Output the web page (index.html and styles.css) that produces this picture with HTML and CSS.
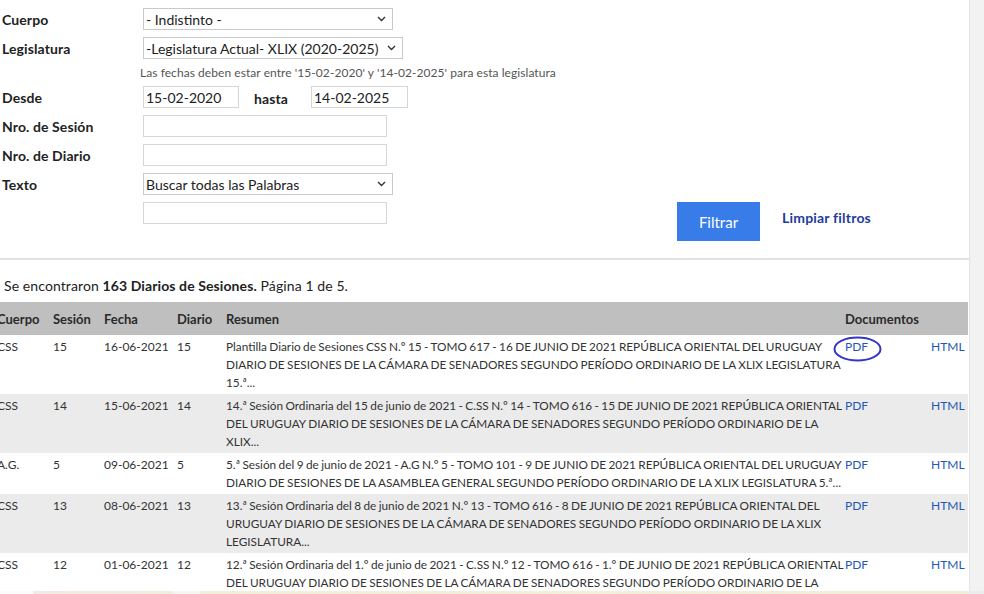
FILE: index.html
```html
<!DOCTYPE html>
<html lang="es">
<head>
<meta charset="utf-8">
<title>Diarios de Sesiones</title>
<link rel="stylesheet" href="styles.css">
</head>
<body>
<div class="page">
  <form class="filters">
    <div class="grid">
      <label class="lbl">Cuerpo</label>
      <div class="sel sel-cuerpo">
        <select><option>- Indistinto -</option></select>
        <svg class="chev" width="9" height="6" viewBox="0 0 9 6"><path d="M1 1 L4.5 4.5 L8 1" fill="none" stroke="#333" stroke-width="1.4"/></svg>
      </div>

      <label class="lbl">Legislatura</label>
      <div class="sel sel-leg">
        <select><option>-Legislatura Actual- XLIX (2020-2025)</option></select>
        <svg class="chev" width="9" height="6" viewBox="0 0 9 6"><path d="M1 1 L4.5 4.5 L8 1" fill="none" stroke="#333" stroke-width="1.4"/></svg>
      </div>

      <span></span>
      <p class="hint">Las fechas deben estar entre '15-02-2020' y '14-02-2025' para esta legislatura</p>

      <label class="lbl">Desde</label>
      <div class="dates">
        <input class="inp date" type="text" value="15-02-2020">
        <span class="lbl hasta">hasta</span>
        <input class="inp date date2" type="text" value="14-02-2025">
      </div>

      <label class="lbl">Nro. de Sesión</label>
      <input class="inp wide" type="text">

      <label class="lbl">Nro. de Diario</label>
      <input class="inp wide" type="text">

      <label class="lbl">Texto</label>
      <div class="sel sel-texto">
        <select><option>Buscar todas las Palabras</option></select>
        <svg class="chev" width="9" height="6" viewBox="0 0 9 6"><path d="M1 1 L4.5 4.5 L8 1" fill="none" stroke="#333" stroke-width="1.4"/></svg>
      </div>

      <span></span>
      <div class="last">
        <input class="inp wide" type="text">
        <button class="btn" type="button">Filtrar</button>
        <a class="clear" href="#">Limpiar filtros</a>
      </div>
    </div>
  </form>

  <p class="count">Se encontraron <b>163 Diarios de Sesiones.</b> Página 1 de 5.</p>

  <table class="results">
    <colgroup>
      <col class="c-cuerpo"><col class="c-sesion"><col class="c-fecha"><col class="c-diario"><col class="c-resumen"><col class="c-pdf"><col class="c-html">
    </colgroup>
    <thead>
      <tr><th>Cuerpo</th><th>Sesión</th><th>Fecha</th><th>Diario</th><th>Resumen</th><th colspan="2">Documentos</th></tr>
    </thead>
    <tbody>
      <tr>
        <td>CSS</td><td>15</td><td>16-06-2021</td><td>15</td>
        <td class="sum">Plantilla Diario de Sesiones CSS N.º 15 - TOMO 617 - 16 DE JUNIO DE 2021 REPÚBLICA ORIENTAL DEL URUGUAY<br>DIARIO DE SESIONES DE LA CÁMARA DE SENADORES SEGUNDO PERÍODO ORDINARIO DE LA XLIX LEGISLATURA<br>15.ª...</td>
        <td class="pdfcell"><a href="#">PDF</a><svg class="mark" width="49" height="26" viewBox="0 0 49 26"><ellipse cx="24.5" cy="13" rx="23" ry="11.5" fill="none" stroke="#3535c8" stroke-width="2"/></svg></td>
        <td><a href="#">HTML</a></td>
      </tr>
      <tr>
        <td>CSS</td><td>14</td><td>15-06-2021</td><td>14</td>
        <td class="sum">14.ª Sesión Ordinaria del 15 de junio de 2021 - C.SS N.º 14 - TOMO 616 - 15 DE JUNIO DE 2021 REPÚBLICA ORIENTAL<br>DEL URUGUAY DIARIO DE SESIONES DE LA CÁMARA DE SENADORES SEGUNDO PERÍODO ORDINARIO DE LA<br>XLIX...</td>
        <td><a href="#">PDF</a></td><td><a href="#">HTML</a></td>
      </tr>
      <tr>
        <td>A.G.</td><td>5</td><td>09-06-2021</td><td>5</td>
        <td class="sum">5.ª Sesión del 9 de junio de 2021 - A.G N.º 5 - TOMO 101 - 9 DE JUNIO DE 2021 REPÚBLICA ORIENTAL DEL URUGUAY<br>DIARIO DE SESIONES DE LA ASAMBLEA GENERAL SEGUNDO PERÍODO ORDINARIO DE LA XLIX LEGISLATURA 5.ª...</td>
        <td><a href="#">PDF</a></td><td><a href="#">HTML</a></td>
      </tr>
      <tr>
        <td>CSS</td><td>13</td><td>08-06-2021</td><td>13</td>
        <td class="sum">13.ª Sesión Ordinaria del 8 de junio de 2021 N.º 13 - TOMO 616 - 8 DE JUNIO DE 2021 REPÚBLICA ORIENTAL DEL<br>URUGUAY DIARIO DE SESIONES DE LA CÁMARA DE SENADORES SEGUNDO PERÍODO ORDINARIO DE LA XLIX<br>LEGISLATURA...</td>
        <td><a href="#">PDF</a></td><td><a href="#">HTML</a></td>
      </tr>
      <tr>
        <td>CSS</td><td>12</td><td>01-06-2021</td><td>12</td>
        <td class="sum">12.ª Sesión Ordinaria del 1.º de junio de 2021 - C.SS N.º 12 - TOMO 616 - 1.º DE JUNIO DE 2021 REPÚBLICA ORIENTAL<br>DEL URUGUAY DIARIO DE SESIONES DE LA CÁMARA DE SENADORES SEGUNDO PERÍODO ORDINARIO DE LA<br>XLIX LEGISLATURA...</td>
        <td><a href="#">PDF</a></td><td><a href="#">HTML</a></td>
      </tr>
    </tbody>
  </table>
</div>
<div class="bottom-strip"></div>
</body>
</html>
```
FILE: styles.css
```css
* { box-sizing: border-box; }
html, body { margin: 0; padding: 0; }
body {
  background: #f2f2f2;
  font-family: Lato, "Noto Sans", sans-serif;
  color: #222;
  overflow: hidden;
  height: 594px;
}
.page {
  width: 970px;
  background: #fff;
  border-right: 1px solid #e4e4e4;
  min-height: 594px;
}
.filters {
  padding: 8px 0 17px 2px;
  border-bottom: 2px solid #e2e2e2;
}
.grid {
  display: grid;
  grid-template-columns: 141px 1fr;
  row-gap: 7px;
  align-items: center;
}
.lbl {
  font-weight: 700;
  font-size: 14px;
  color: #222;
  letter-spacing: 0.1px;
}
.sel { position: relative; height: 22px; }
.sel select {
  appearance: none;
  -webkit-appearance: none;
  height: 22px;
  border: 1px solid #c9c9c9;
  border-radius: 0;
  background: #fff;
  font-family: Lato, "Noto Sans", sans-serif;
  font-size: 14px;
  color: #222;
  padding: 0 20px 0 2px;
  margin: 0;
  display: block;
}
.sel-cuerpo, .sel-cuerpo select, .sel-texto, .sel-texto select { width: 250px; }
.sel-leg, .sel-leg select { width: 260px; }
.chev { position: absolute; top: 8px; right: 7px; pointer-events: none; }
.hint {
  margin: 0 0 0 -3px;
  font-size: 12px;
  line-height: 13px;
  color: #555;
  letter-spacing: 0.06px;
}
.inp {
  height: 22px;
  border: 1px solid #d6d6d6;
  background: #fff;
  font-family: Lato, "Noto Sans", sans-serif;
  font-size: 14px;
  color: #222;
  padding: 0 2px;
  margin: 0;
  display: block;
}
.wide { width: 244px; }
.dates { display: flex; align-items: center; }
.date { width: 96px; }
.date2 { width: 97px; }
.hasta { margin: 0 23px 0 15px; padding-top: 2px; }
.last { display: flex; align-items: flex-start; }
.btn {
  margin-left: 290px;
  width: 83px;
  height: 39px;
  background: #387ce9;
  color: #fff;
  border: none;
  font-family: Lato, "Noto Sans", sans-serif;
  font-size: 15px;
  padding: 0;
}
.clear {
  margin: 7px 0 0 22px;
  font-size: 14px;
  font-weight: 700;
  color: #1f3d9c;
  text-decoration: none;
  letter-spacing: 0.2px;
}
.count {
  margin: 17px 0 0 4px;
  font-size: 14px;
  line-height: 17px;
  color: #222;
  letter-spacing: 0.1px;
}
.count b { font-weight: 700; }
.results {
  margin: 8px 0 0 -8px;
  width: 976px;
  table-layout: fixed;
  border-collapse: collapse;
  font-size: 12px;
  color: #333;
}
.c-cuerpo { width: 56px; }
.c-sesion { width: 51px; }
.c-fecha { width: 73px; }
.c-diario { width: 49px; }
.c-resumen { width: 619px; }
.c-pdf { width: 86px; }
.c-html { width: 42px; }
.results th {
  background: #bfbfbf;
  text-align: left;
  font-size: 13px;
  font-weight: 700;
  color: #2a2a2a;
  height: 33px;
  padding: 1px 5px 0;
}
.results td {
  vertical-align: top;
  line-height: 18px;
  padding: 3px 5px 2px;
  white-space: nowrap;
}
.results td.sum { font-size: 11.8px; word-spacing: -0.6px; }
.results tbody tr:nth-child(even) td { background: #ebebeb; }
.results a { color: #1f57b3; text-decoration: none; }
.pdfcell { position: relative; }
.mark { position: absolute; left: -7px; top: 1px; }
.bottom-strip {
  position: fixed;
  left: 0;
  right: 0;
  bottom: 0;
  height: 3px;
  background: linear-gradient(90deg, #fbfbfb 0 33px, #f3e8e2 33px, #f1ece0 170px, #f6f4ee 175px, #f6f4ee 200px, #f3eedc 200px, #f4efd8 600px, #f1ecd8 968px, #ececec 968px);
}
```
